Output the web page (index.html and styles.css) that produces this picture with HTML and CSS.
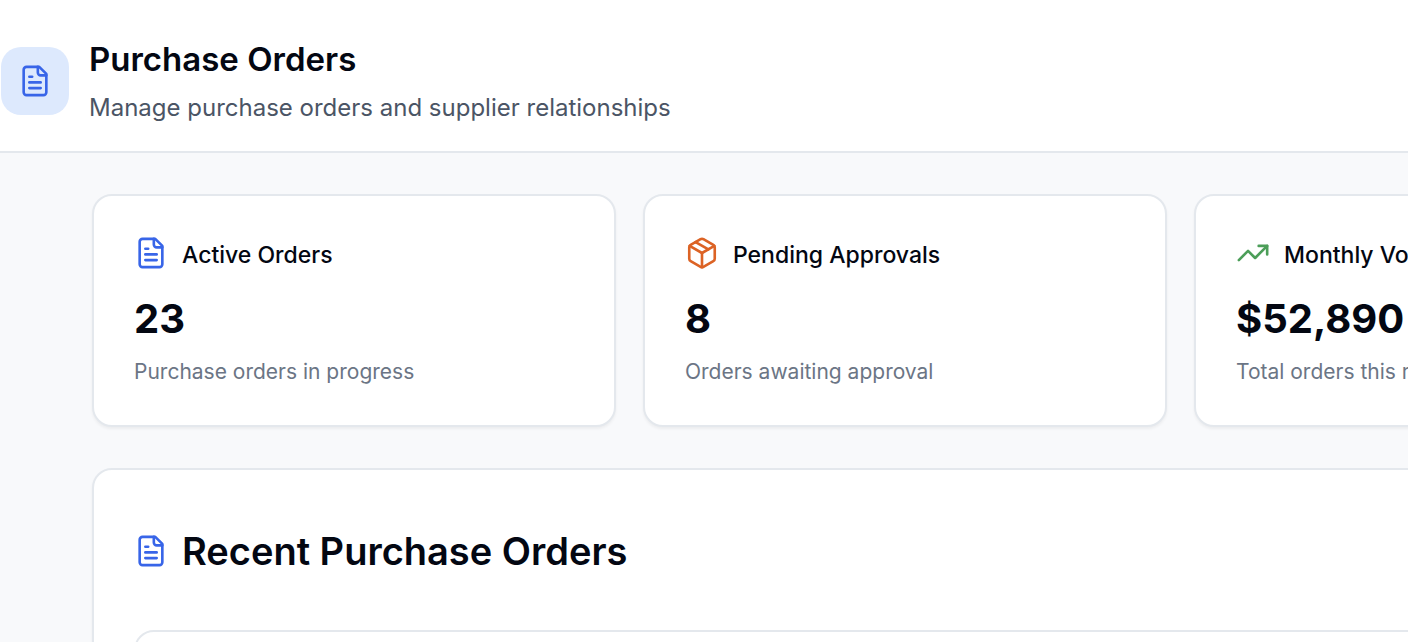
FILE: index.html
```html
<!DOCTYPE html>
<html lang="en">
<head>
<meta charset="utf-8">
<meta name="viewport" content="width=device-width, initial-scale=1">
<title>Purchase Orders</title>
<link rel="stylesheet" href="styles.css">
</head>
<body>
<svg class="sprite" aria-hidden="true">
  <symbol id="file-text" viewBox="0 0 24 24"><path d="M15 2H6a2 2 0 0 0-2 2v16a2 2 0 0 0 2 2h12a2 2 0 0 0 2-2V7Z"/><path d="M14 2v4a2 2 0 0 0 2 2h4"/><path d="M10 9H8"/><path d="M16 13H8"/><path d="M16 17H8"/></symbol>
  <symbol id="package" viewBox="0 0 24 24"><path d="M11 21.73a2 2 0 0 0 2 0l7-4A2 2 0 0 0 21 16V8a2 2 0 0 0-1-1.73l-7-4a2 2 0 0 0-2 0l-7 4A2 2 0 0 0 3 8v8a2 2 0 0 0 1 1.73z"/><path d="M12 22V12"/><path d="M3.29 7 12 12l8.71-5"/><path d="m7.5 4.27 9 5.15"/></symbol>
  <symbol id="trending-up" viewBox="0 0 24 24"><path d="m22 7-8.5 8.5-5-5L2 17"/><path d="M16 7h6v6"/></symbol>
</svg>
<header class="page-header">
  <div class="badge"><svg class="icon blue" aria-hidden="true"><use href="#file-text"/></svg></div>
  <div>
    <h1 class="page-title">Purchase Orders</h1>
    <p class="page-subtitle">Manage purchase orders and supplier relationships</p>
  </div>
</header>
<main class="content">
  <section class="stats">
    <article class="card stat">
      <h2 class="stat-head"><svg class="icon blue" aria-hidden="true"><use href="#file-text"/></svg>Active Orders</h2>
      <p class="stat-value">23</p>
      <p class="stat-note">Purchase orders in progress</p>
    </article>
    <article class="card stat">
      <h2 class="stat-head"><svg class="icon orange" aria-hidden="true"><use href="#package"/></svg>Pending Approvals</h2>
      <p class="stat-value">8</p>
      <p class="stat-note">Orders awaiting approval</p>
    </article>
    <article class="card stat">
      <h2 class="stat-head"><svg class="icon green" aria-hidden="true"><use href="#trending-up"/></svg>Monthly Volume</h2>
      <p class="stat-value">$52,890</p>
      <p class="stat-note">Total orders this month</p>
    </article>
  </section>
  <section class="card recent">
    <h2 class="recent-title"><svg class="icon blue" aria-hidden="true"><use href="#file-text"/></svg>Recent Purchase Orders</h2>
    <div class="order-list"></div>
  </section>
</main>
</body>
</html>
```
FILE: styles.css
```css
* { box-sizing: border-box; margin: 0; }
html { height: 100%; overflow: hidden; }
body {
  height: 100%;
  display: flex;
  flex-direction: column;
  overflow: hidden;
  background: #f8f9fb;
  color: #030712;
  font-family: Inter, "Liberation Sans", sans-serif;
}
.sprite { display: none; }
.icon {
  width: 34px;
  height: 34px;
  flex: none;
  fill: none;
  stroke: currentColor;
  stroke-width: 1.85;
  stroke-linecap: round;
  stroke-linejoin: round;
}
.blue { color: #3865e8; }
.orange { color: #dc6325; }
.green { color: #4c9e59; }

.page-header {
  flex: none;
  display: flex;
  align-items: center;
  gap: 20px;
  padding: 35px 24px 24px 1px;
  background: #fff;
  border-bottom: 2px solid #e4e8ed;
}
.badge {
  display: grid;
  place-items: center;
  flex: none;
  width: 68px;
  height: 68px;
  border-radius: 20px;
  background: #dde9fd;
}
.page-title { font-size: 33px; line-height: 48px; font-weight: 600; }
.page-subtitle { margin-top: 6px; font-size: 24px; line-height: 38px; color: #4b5565; }

.content {
  flex: none;
  display: grid;
  gap: 41px;
  width: max-content;
  min-width: 100%;
  padding: 41px 92px;
}
.card {
  background: #fff;
  border: 2px solid #e4e8ed;
  border-radius: 20px;
  box-shadow: 0 2px 3px rgb(0 0 0 / 5%);
}
.stats {
  display: grid;
  grid-template-columns: repeat(3, minmax(524px, 1fr));
  gap: 27px;
}
.stat { padding: 40px 40px 39px; }
.stat-head {
  display: flex;
  align-items: flex-start;
  gap: 14px;
  font-size: 23px;
  line-height: 38px;
  font-weight: 500;
}
.stat-value { margin-top: 17px; font-size: 40px; line-height: 55px; font-weight: 700; }
.stat-note { margin-top: 12px; font-size: 21px; line-height: 28px; color: #6b7585; }

.recent { padding: 60px 40px 41px; }
.recent-title {
  display: flex;
  align-items: center;
  gap: 14px;
  font-size: 38px;
  line-height: 42px;
  font-weight: 600;
}
.order-list {
  min-height: 240px;
  margin-top: 58px;
  border: 2px solid #e4e8ed;
  border-radius: 20px;
}
```
